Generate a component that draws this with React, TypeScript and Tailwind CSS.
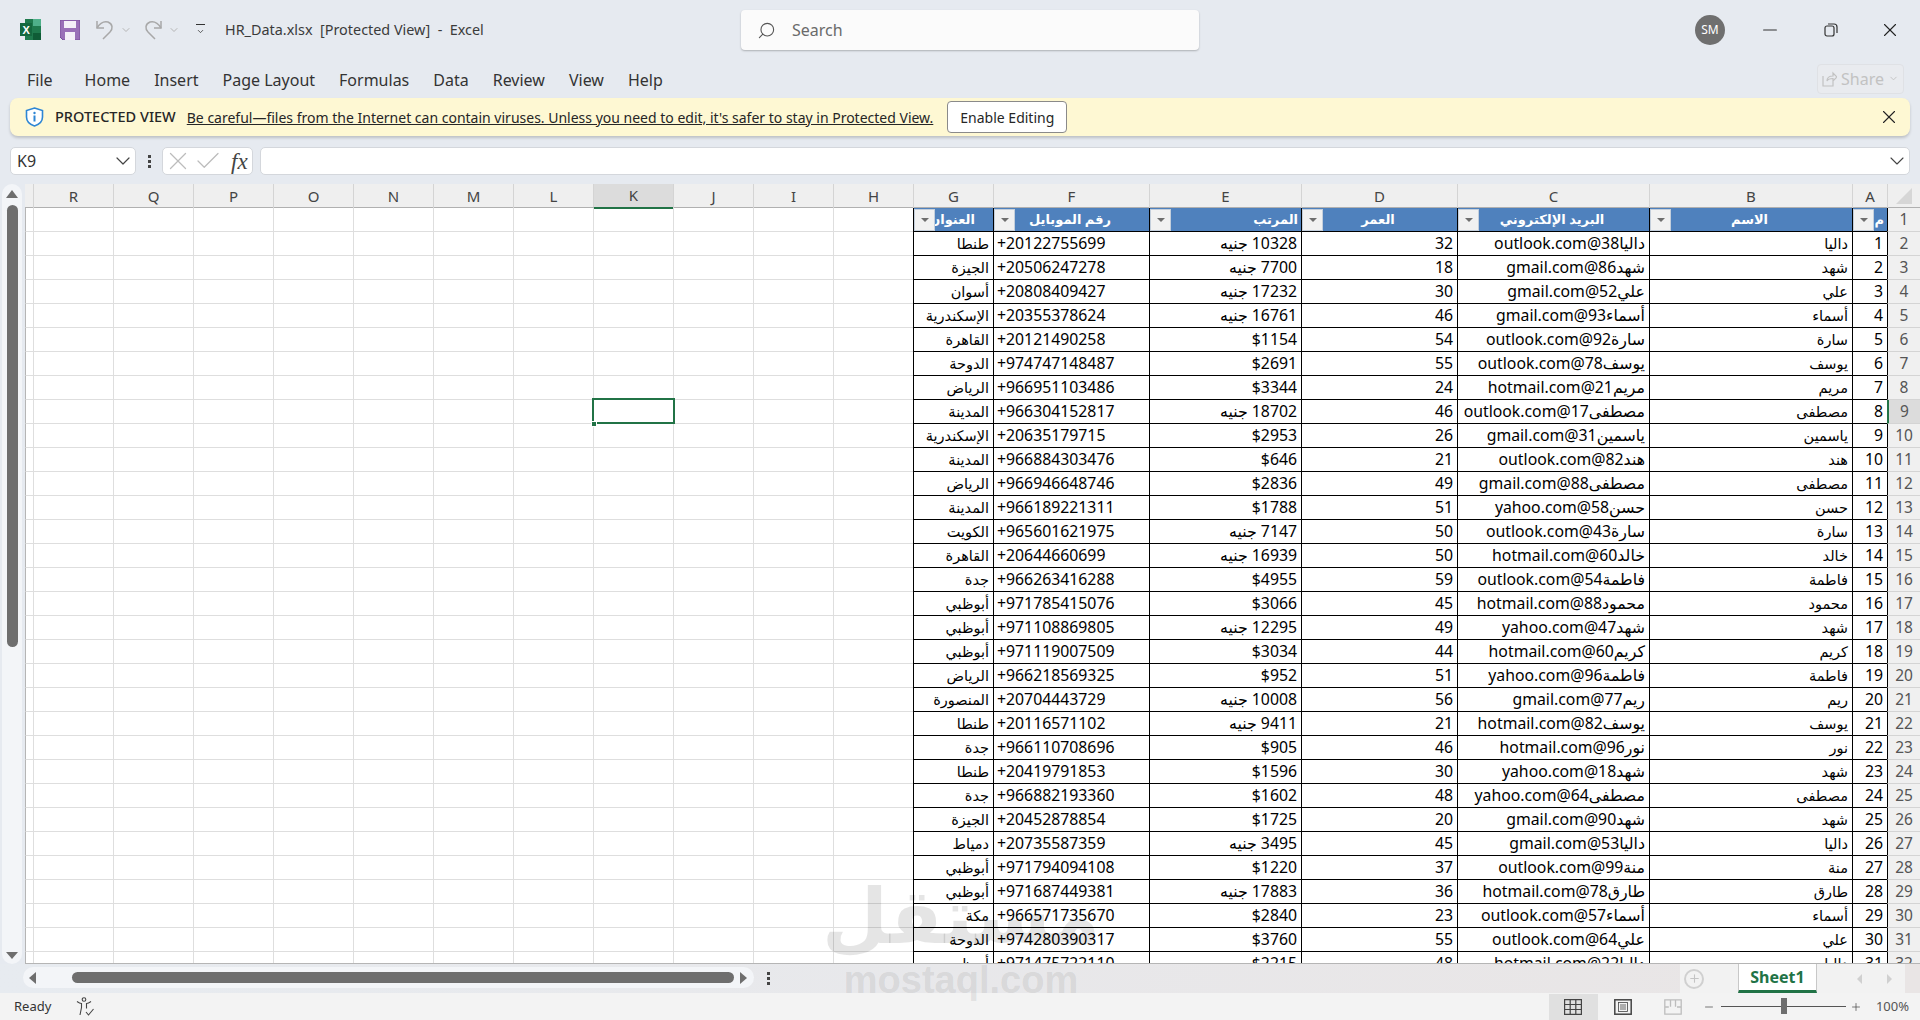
import React from "react";
import { ChevronDown, Search, X, Check, Plus, Minus } from "lucide-react";

const sheetCols =
  "grid grid-cols-[8px_repeat(12,80px)_156px_152px_156px_192px_203px_35px_33px]";

const emptyLetters = ["R", "Q", "P", "O", "N", "M", "L", "K", "J", "I", "H", "G"];
const tableLetters = ["F", "E", "D", "C", "B", "A"];
const tabs = ["Home", "Insert", "Page Layout", "Formulas", "Data", "Review", "View", "Help"];

const egp = "جنيه";

// id is the row index + 1
const people: [string, string, number, string, string, string][] = [
  ["داليا", "داليا38@outlook.com", 32, `10328 ${egp}`, "+20122755699", "طنطا"],
  ["شهد", "شهد86@gmail.com", 18, `7700 ${egp}`, "+20506247278", "الجيزة"],
  ["علي", "علي52@gmail.com", 30, `17232 ${egp}`, "+20808409427", "أسوان"],
  ["أسماء", "أسماء93@gmail.com", 46, `16761 ${egp}`, "+20355378624", "الإسكندرية"],
  ["سارة", "سارة92@outlook.com", 54, "$1154", "+20121490258", "القاهرة"],
  ["يوسف", "يوسف78@outlook.com", 55, "$2691", "+974747148487", "الدوحة"],
  ["مريم", "مريم21@hotmail.com", 24, "$3344", "+966951103486", "الرياض"],
  ["مصطفى", "مصطفى17@outlook.com", 46, `18702 ${egp}`, "+966304152817", "المدينة"],
  ["ياسمين", "ياسمين31@gmail.com", 26, "$2953", "+20635179715", "الإسكندرية"],
  ["هند", "هند82@outlook.com", 21, "$646", "+966884303476", "المدينة"],
  ["مصطفى", "مصطفى88@gmail.com", 49, "$2836", "+966946648746", "الرياض"],
  ["حسن", "حسن58@yahoo.com", 51, "$1788", "+966189221311", "المدينة"],
  ["سارة", "سارة43@outlook.com", 50, `7147 ${egp}`, "+965601621975", "الكويت"],
  ["خالد", "خالد60@hotmail.com", 50, `16939 ${egp}`, "+20644660699", "القاهرة"],
  ["فاطمة", "فاطمة54@outlook.com", 59, "$4955", "+966263416288", "جدة"],
  ["محمود", "محمود88@hotmail.com", 45, "$3066", "+971785415076", "أبوظبي"],
  ["شهد", "شهد47@yahoo.com", 49, `12295 ${egp}`, "+971108869805", "أبوظبي"],
  ["كريم", "كريم60@hotmail.com", 44, "$3034", "+971119007509", "أبوظبي"],
  ["فاطمة", "فاطمة96@yahoo.com", 51, "$952", "+966218569325", "الرياض"],
  ["ريم", "ريم77@gmail.com", 56, `10008 ${egp}`, "+20704443729", "المنصورة"],
  ["يوسف", "يوسف82@hotmail.com", 21, `9411 ${egp}`, "+20116571102", "طنطا"],
  ["نور", "نور96@hotmail.com", 46, "$905", "+966110708696", "جدة"],
  ["شهد", "شهد18@yahoo.com", 30, "$1596", "+20419791853", "طنطا"],
  ["مصطفى", "مصطفى64@yahoo.com", 48, "$1602", "+966882193360", "جدة"],
  ["شهد", "شهد90@gmail.com", 20, "$1725", "+20452878854", "الجيزة"],
  ["داليا", "داليا53@gmail.com", 45, `3495 ${egp}`, "+20735587359", "دمياط"],
  ["منة", "منة99@outlook.com", 37, "$1220", "+971794094108", "أبوظبي"],
  ["طارق", "طارق78@hotmail.com", 36, `17883 ${egp}`, "+971687449381", "أبوظبي"],
  ["أسماء", "أسماء57@outlook.com", 23, "$2840", "+966571735670", "مكة"],
  ["علي", "علي64@outlook.com", 55, "$3760", "+974280390317", "الدوحة"],
  ["داليا", "داليا22@hotmail.com", 48, "$2215", "+971475722110", "أبوظبي"],
];

const ExcelIcon = () => (
  <svg width="21" height="21" viewBox="0 0 21 21">
    <rect x="5" y="0" width="16" height="21" fill="#1f7a4d" />
    <rect x="13" y="0" width="8" height="7" fill="#4fb08a" />
    <rect x="13" y="14" width="8" height="7" fill="#0f5c36" />
    <rect x="0" y="4" width="12" height="13" fill="#14683f" />
    <text x="2.5" y="14.5" fontSize="11" fontWeight="700" fill="#ffffff" fontFamily="Liberation Sans">
      X
    </text>
  </svg>
);

const SaveIcon = () => (
  <svg width="20" height="20" viewBox="0 0 20 20">
    <path d="M0 0h20v20H3l-3-3z" fill="#9a6fb8" stroke="#7a4c9c" />
    <rect x="4" y="1" width="12" height="7" fill="#f4eef8" />
    <rect x="5" y="12" width="10" height="8" fill="#f4eef8" />
  </svg>
);

const ShieldIcon = () => (
  <svg width="19" height="20" viewBox="0 0 19 20">
    <path d="M9.5 1 17.5 3.5V10c0 4.5-3.5 7.5-8 9-4.5-1.500-8-4.500-8-9V3.500z" fill="#ffffff" stroke="#2e86d4" strokeWidth="1.600" />
    <circle cx="9.500" cy="6" r="1.200" fill="#2e86d4" />
    <rect x="8.500" y="8.500" width="2" height="6" fill="#2e86d4" />
  </svg>
);

const UndoIcon = ({ flip }: { flip?: boolean }) => (
  <svg
    className={flip ? "-scale-x-100" : ""}
    width="18"
    height="21"
    viewBox="0 0 18 21"
    fill="none"
    stroke="#a8a8a8"
    strokeWidth="1.500"
  >
    <path d="M1 2v7h7" />
    <path d="M1 9c3-5 7-7 11-6 5 2 5 7 2 10l-7 7" />
  </svg>
);

const FilterButton = () => (
  <div className="relative z-10 w-[21px] h-[22px] shrink-0 bg-[#f1f1f1] border border-[#c4cfdc] flex items-center justify-center">
    <div className="w-0 h-0 border-l-[4px] border-r-[4px] border-t-[4px] border-l-transparent border-r-transparent border-t-[#6e6e6e]" />
  </div>
);

const Letter = ({ label, active }: { label: string; active?: boolean }) => (
  <div
    className={`border-l border-[#d4d4d4] flex items-center justify-center text-[15px] text-[#444] ${
      active ? "bg-[#dcdcdc] border-b-2 border-b-[#217346]" : ""
    }`}
  >
    {label}
  </div>
);

const HeaderCell = ({ label, align }: { label: string; align: "center" | "right" }) => (
  <div className="border-l border-b border-black bg-[#4f81bd] flex items-center overflow-hidden">
    <FilterButton />
    <div
      dir="rtl"
      className={`flex-1 min-w-0 whitespace-nowrap overflow-hidden text-white font-bold text-[13px] pr-[3px] ${
        align === "center" ? "text-center -ml-[21px]" : "text-right"
      }`}
    >
      {label}
    </div>
  </div>
);

const DataCell = ({
  children,
  dir = "rtl",
  arabic,
}: {
  children: React.ReactNode;
  dir?: "rtl" | "ltr";
  arabic?: boolean;
}) => (
  <div
    dir={dir}
    className={`border-l border-b border-black flex items-center whitespace-nowrap overflow-hidden pt-px pl-[3px] pr-[4px] text-black ${
      arabic ? "text-[14.5px]" : "text-[15.8px]"
    }`}
  >
    {children}
  </div>
);

const EmptyCells = () => (
  <>
    <div className="border-l border-b border-l-[#b5b5b5] border-b-[#dedede]" />
    {emptyLetters.slice(0, 11).map((l) => (
      <div key={l} className="border-l border-b border-[#dedede]" />
    ))}
  </>
);

const TitleBar = () => (
  <div className="h-[60px] flex items-center">
    <div className="w-[741px] flex items-center pl-[20px] shrink-0">
      <ExcelIcon />
      <div className="ml-[19px]">
        <SaveIcon />
      </div>
      <div className="ml-[16px]">
        <UndoIcon />
      </div>
      <ChevronDown className="ml-[6px] w-[12px] h-[12px] text-[#b5b5b5]" />
      <div className="ml-[12px]">
        <UndoIcon flip />
      </div>
      <ChevronDown className="ml-[6px] w-[12px] h-[12px] text-[#b5b5b5]" />
      <div className="ml-[15px] flex flex-col items-center gap-[2px] w-[10px]">
        <div className="w-[9px] h-px bg-[#333]" />
        <ChevronDown className="w-[11px] h-[9px] text-[#333]" strokeWidth={2} />
      </div>
      <div className="ml-[20px] text-[14.4px] text-[#3b3b3b] whitespace-pre">HR_Data.xlsx  [Protected View]  -  Excel</div>
    </div>
    <div className="w-[458px] h-[40px] bg-[#fbfbfb] rounded-[4px] shadow-[0_1px_2px_rgba(0,0,0,0.25)] flex items-center pl-[16px]">
      <Search className="w-[19px] h-[19px] text-[#555] -scale-x-100" strokeWidth={1.4} />
      <span className="ml-[16px] text-[16px] text-[#6a6a6a]">Search</span>
    </div>
    <div className="ml-[496px] w-[30px] h-[30px] rounded-full bg-[#6f6f6f] text-white text-[12px] flex items-center justify-center">
      SM
    </div>
    <Minus className="ml-[34px] w-[22px] h-[22px] text-[#333]" strokeWidth={1.1} />
    <svg className="ml-[43px]" width="14" height="14" viewBox="0 0 14 14" fill="none" stroke="#333" strokeWidth="1.200">
      <rect x="1" y="3" width="9" height="10" rx="2" />
      <path d="M4 1h6a3 3 0 0 1 3 3v6" />
    </svg>
    <X className="ml-[41px] w-[22px] h-[22px] text-[#222]" strokeWidth={1.2} />
  </div>
);

const RibbonTabs = () => (
  <div className="h-[38px] flex items-center pt-[2px] pl-[27px] pr-[16px] text-[16px] text-[#333]">
    <span className="mr-[32px]">File</span>
    <div className="flex gap-[24px]">
      {tabs.map((t) => (
        <span key={t}>{t}</span>
      ))}
    </div>
    <div className="ml-auto -mt-[3px] w-[87px] h-[30px] border border-[#dfe1e5] bg-[#e9ebef] rounded-[4px] flex items-center justify-center gap-[4px] text-[#c2c2c2]">
      <svg width="15" height="16" viewBox="0 0 15 16" fill="none" stroke="#c2c2c2" strokeWidth="1.200">
        <path d="M1 5v10h10v-5M5 10c0-4 3-5 6-5V2l4 4-4 4V7.500c-3 0-5 .500-6 2.500z" />
      </svg>
      <span>Share</span>
      <ChevronDown className="w-[11px] h-[11px]" />
    </div>
  </div>
);

const ProtectedBar = () => (
  <div className="mx-[10px] h-[38px] bg-[#fef8d3] rounded-[8px] shadow-[0_2px_3px_rgba(0,0,0,0.18)] flex items-center pl-[15px] pr-[10px] text-[14px] text-[#262626]">
    <ShieldIcon />
    <span className="ml-[11px] font-medium text-[14.5px]">PROTECTED VIEW</span>
    <span className="ml-[11px] underline text-[14px] whitespace-nowrap">
      Be careful—files from the Internet can contain viruses. Unless you need to edit, it's safer to stay in Protected View.
    </span>
    <div className="ml-[14px] w-[120px] h-[32px] bg-white border border-[#8a8a8a] rounded-[4px] flex items-center justify-center">
      Enable Editing
    </div>
    <X className="ml-auto w-[22px] h-[22px] text-[#222]" strokeWidth={1.2} />
  </div>
);

const FormulaBar = () => (
  <div className="mt-[11px] h-[28px] mx-[10px] flex items-center">
    <div className="w-[126px] h-full bg-white rounded-[5px] border border-[#d4d7dc] flex items-center justify-between pl-[6px] text-[16px] text-[#333]">
      K9
      <ChevronDown className="w-[24px] h-[24px] text-[#444]" strokeWidth={1.2} />
    </div>
    <div className="w-[26px] flex flex-col items-center gap-[2px]">
      <div className="w-[3px] h-[3px] bg-[#444]" />
      <div className="w-[3px] h-[3px] bg-[#444]" />
      <div className="w-[3px] h-[3px] bg-[#444]" />
    </div>
    <div className="w-[91px] h-full bg-white rounded-[5px] border border-[#d4d7dc] flex items-center">
      <X className="w-[30px] h-[30px] text-[#bcbcbc] shrink-0" strokeWidth={1} />
      <Check className="w-[30px] h-[30px] text-[#bcbcbc] shrink-0" strokeWidth={1} />
      <span className="ml-[8px] font-['Liberation_Serif'] italic text-[23px] leading-none text-[#444]">fx</span>
    </div>
    <div className="ml-[7px] flex-1 h-full bg-white rounded-[5px] border border-[#d4d7dc] flex items-center justify-end">
      <ChevronDown className="w-[24px] h-[24px] text-[#444]" strokeWidth={1.1} />
    </div>
  </div>
);

const VScroll = () => (
  <div className="w-[25px] shrink-0 pl-[2px] pr-[3px] bg-[#e6eaf0]">
    <div className="h-full bg-[#f3f5f8] rounded-full flex flex-col items-center pt-[6px]">
      <div className="w-0 h-0 border-l-[6px] border-r-[6px] border-b-[8px] border-l-transparent border-r-transparent border-b-[#6e6e6e]" />
      <div className="mt-[7px] w-[11px] h-[442px] bg-[#6e6e6e] rounded-full" />
      <div className="mt-auto mb-[5px] w-0 h-0 border-l-[6px] border-r-[6px] border-t-[7px] border-l-transparent border-r-transparent border-t-[#6e6e6e]" />
    </div>
  </div>
);

const Sheet = () => (
  <div className="relative flex-1 min-w-0 h-[780px] overflow-hidden border-b border-[#b5b5b5]">
    <div className={`${sheetCols} h-[24px] bg-[#efefef] border-b border-[#b0b0b0]`}>
      <div />
      {emptyLetters.map((l) => (
        <Letter key={l} label={l} active={l === "K"} />
      ))}
      {tableLetters.map((l) => (
        <Letter key={l} label={l} />
      ))}
      <div className="border-l border-[#d4d4d4] flex items-center justify-center">
        <div className="w-0 h-0 border-b-[16px] border-l-[16px] border-b-[#d6d6d6] border-l-transparent" />
      </div>
    </div>

    <div className={`${sheetCols} h-[24px]`}>
      <EmptyCells />
      <HeaderCell label="العنوان" align="center" />
      <HeaderCell label="رقم الموبايل" align="center" />
      <HeaderCell label="المرتب" align="right" />
      <HeaderCell label="العمر" align="center" />
      <HeaderCell label="البريد الإلكتروني" align="center" />
      <HeaderCell label="الاسم" align="center" />
      <HeaderCell label="م" align="right" />
      <div className="border-l border-b border-l-black border-b-[#d4d4d4] bg-[#f0f0f0] flex items-center justify-center text-[15.5px] text-[#555]">
        1
      </div>
    </div>

    {people.map(([name, email, age, salary, phone, city], i) => (
      <div key={i} className={`${sheetCols} h-[24px]`}>
        <EmptyCells />
        <DataCell arabic>{city}</DataCell>
        <DataCell dir="ltr">{phone}</DataCell>
        <DataCell>{salary}</DataCell>
        <DataCell>{age}</DataCell>
        <DataCell>{email}</DataCell>
        <DataCell arabic>{name}</DataCell>
        <DataCell dir="ltr">
          <span className="ml-auto">{i + 1}</span>
        </DataCell>
        <div
          className={`border-b border-b-[#d4d4d4] flex items-center justify-center text-[15.5px] text-[#555] ${
            i === 7 ? "bg-[#dcdcdc] border-l-2 border-l-[#217346]" : "bg-[#f0f0f0] border-l border-l-black"
          }`}
        >
          {i + 2}
        </div>
      </div>
    ))}

    {/* active cell K9 */}
    <div className="absolute left-[567px] top-[214px] w-[83px] h-[26px] border-2 border-[#217346]" />
    <div className="absolute left-[566px] top-[237px] w-[6px] h-[6px] bg-[#217346] border border-white" />
  </div>
);

const HScroll = () => (
  <div className="h-[29px] flex bg-gradient-to-r from-[#e7ebf0] to-[#e9e5e5]">
    <div className="pl-[23px] pt-[3px] flex items-start">
      <div className="w-[731px] h-[21px] bg-[#f3f5f8] rounded-full flex items-center px-[6px]">
        <div className="w-0 h-0 border-t-[6px] border-b-[6px] border-r-[7px] border-t-transparent border-b-transparent border-r-[#6e6e6e]" />
        <div className="ml-[36px] w-[662px] h-[11px] bg-[#6e6e6e] rounded-full" />
        <div className="ml-[6px] w-0 h-0 border-t-[6px] border-b-[6px] border-l-[7px] border-t-transparent border-b-transparent border-l-[#6e6e6e]" />
      </div>
      <div className="ml-[13px] mt-[5px] flex flex-col gap-[2px]">
        <div className="w-[3px] h-[3px] bg-[#444]" />
        <div className="w-[3px] h-[3px] bg-[#444]" />
        <div className="w-[3px] h-[3px] bg-[#444]" />
      </div>
    </div>
    <div className="ml-auto w-[240px] flex bg-[#f2f2f2]">
      <div className="w-[58px] flex items-center pl-[4px]">
        <div className="w-[20px] h-[20px] rounded-full border-2 border-[#d0d0d0] flex items-center justify-center">
          <Plus className="w-[13px] h-[13px] text-[#c4c4c4]" strokeWidth={2} />
        </div>
      </div>
      <div className="w-[79px] bg-white border-b-[3px] border-b-[#217346] border-x border-x-[#c8c8c8] flex items-center justify-center text-[16px] font-bold text-[#217346]">
        Sheet1
      </div>
      <div className="flex-1 flex items-center pl-[40px] gap-[25px]">
        <div className="w-0 h-0 border-t-[5px] border-b-[5px] border-r-[5px] border-t-transparent border-b-transparent border-r-[#d0d0d0]" />
        <div className="w-0 h-0 border-t-[5px] border-b-[5px] border-l-[5px] border-t-transparent border-b-transparent border-l-[#d0d0d0]" />
      </div>
      <div className="w-[15px] bg-[#e9e5e5]" />
    </div>
  </div>
);

const StatusBar = () => (
  <div className="h-[27px] bg-[#f3f3f3] flex items-center text-[13px] text-[#333]">
    <span className="ml-[14px]">Ready</span>
    <svg className="ml-[25px]" width="19" height="19" viewBox="0 0 19 19" fill="none" stroke="#444" strokeWidth="1.100">
      <circle cx="8" cy="2.500" r="1.800" />
      <path d="M1 4.500c2 1.500 4 2 4.500 2v4L4 18M15 4.500c-2 1.500-4 2-4.500 2v5" />
      <path d="M10 15l2.500 3 5-6" />
    </svg>
    <div className="ml-auto w-[49px] h-[26px] bg-[#e0e0e0] flex items-center justify-center">
      <svg width="18" height="16" viewBox="0 0 18 16" fill="none" stroke="#444" strokeWidth="1.200">
        <path d="M.6.6h16.800v14.800H.6zM6.200.6v14.800M11.800.6v14.800M.6 5.500h16.800M.6 10.500h16.800" />
      </svg>
    </div>
    <div className="w-[50px] flex items-center justify-center">
      <svg width="18" height="16" viewBox="0 0 18 16" fill="none" stroke="#444" strokeWidth="1.200">
        <rect x=".8" y=".8" width="16.400" height="14.400" strokeWidth="1.500" />
        <rect x="4.500" y="3.500" width="9" height="9" strokeWidth=".8" />
        <path d="M6 6h6M6 8h6M6 10h6" strokeWidth=".8" />
      </svg>
    </div>
    <div className="w-[50px] flex items-center justify-center">
      <svg width="18" height="16" viewBox="0 0 18 16" fill="none" stroke="#bdbdbd" strokeWidth="1.300">
        <path d="M.8.8h16.400v14.400H.8zM6.500.8v7M11.500.8v7M.8 8h4M13 8h4.200" />
      </svg>
    </div>
    <Minus className="ml-[5px] w-[12px] h-[12px] text-[#444]" strokeWidth={1.4} />
    <div className="ml-[6px] w-[125px] h-px bg-[#555] relative">
      <div className="absolute left-[60px] -top-[8px] w-[6px] h-[16px] bg-[#6e6e6e]" />
    </div>
    <Plus className="ml-[4px] w-[12px] h-[12px] text-[#444]" strokeWidth={1.4} />
    <span className="ml-[14px] mr-[11px] text-[#555]">100%</span>
  </div>
);

export default function App() {
  return (
    <div className="w-[1920px] h-[1020px] overflow-hidden relative bg-[#e6eaf0] font-['Noto_Sans','DejaVu_Sans',sans-serif]">
      <TitleBar />
      <RibbonTabs />
      <ProtectedBar />
      <FormulaBar />
      <div className="mt-[9px] flex bg-white">
        <VScroll />
        <Sheet />
      </div>
      <HScroll />
      <StatusBar />

      {/* mostaql watermark */}
      <div className="absolute left-[845px] top-[876px] w-[232px] flex flex-col items-center pointer-events-none font-bold">
        <span dir="rtl" className="font-['DejaVu_Sans'] text-[76px] leading-[82px] text-black/10">مستقل</span>
        <span className="text-[38px] leading-[44px] font-['Liberation_Sans'] text-[#707070]/15">mostaql.com</span>
      </div>
    </div>
  );
}
